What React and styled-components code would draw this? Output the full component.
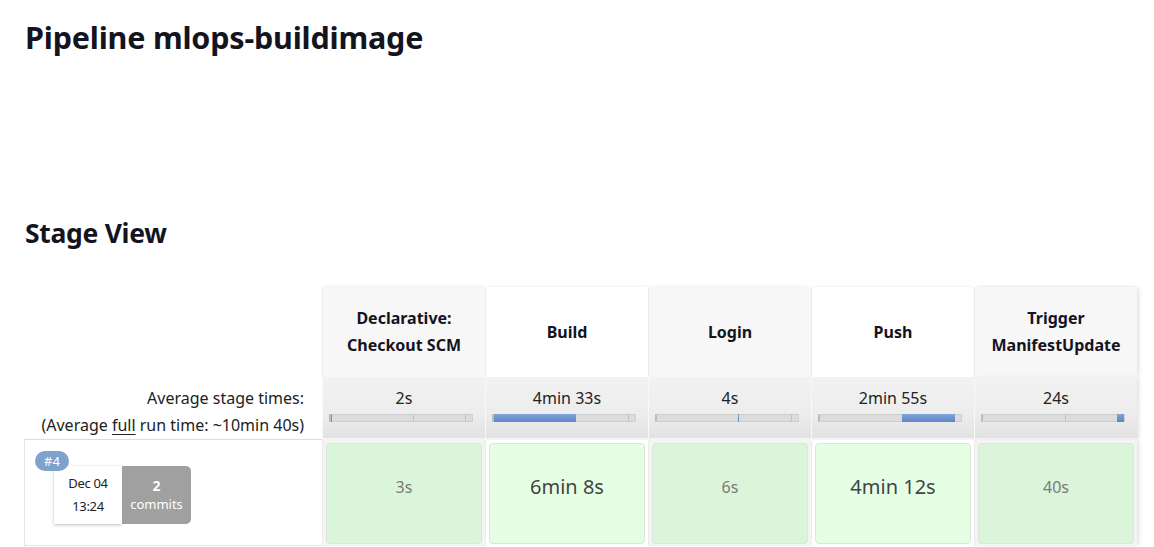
import React from "react"
import styled, { createGlobalStyle } from "styled-components"

const GlobalStyle = createGlobalStyle`
  body {
    margin: 0;
    background: #fff;
    font-family: "Noto Sans", "Open Sans", sans-serif;
    color: #14141f;
  }
`

const Page = styled.div`
  padding: 0 24px;
  overflow: hidden;
  height: 547px;
`

const Title = styled.h1`
  margin: 17px 0 0 1px;
  font-size: 30.5px;
  font-weight: 700;
  line-height: 40px;
  letter-spacing: -0.2px;
`

const Section = styled.h2`
  margin: 158px 0 0 1px;
  font-size: 26.5px;
  font-weight: 700;
  line-height: 36px;
  letter-spacing: -0.3px;
`

const Grid = styled.div`
  margin-top: 36px;
  display: grid;
  grid-template-columns: 298px repeat(5, 163px);
  grid-template-rows: 90px 63px 106px;
`

const Blank = styled.div``

const Head = styled.div`
  background: ${(p) => (p.$odd ? "#f7f7f7" : "#fff")};
  border-left: 1px solid #ececec;
  box-shadow: ${(p) =>
    p.$last
      ? "3px 0 4px -1px rgba(0,0,0,0.12), 0 -2px 3px -2px rgba(0,0,0,0.1)"
      : "0 -2px 3px -2px rgba(0,0,0,0.1)"};
  display: flex;
  align-items: center;
  justify-content: center;
  text-align: center;
  font-size: 16px;
  font-weight: 700;
  line-height: 27px;
  padding: 0 8px;
`

const AvgLabel = styled.div`
  text-align: right;
  padding: 8px 18px 0 0;
  font-size: 16px;
  line-height: 27px;
  color: #222;
  border-bottom: 1px solid #ddd;

  u {
    text-underline-offset: 3px;
  }
`

const AvgCell = styled.div`
  background: linear-gradient(#f2f2f2 0%, #ededed 60%, #e2e2e2 100%);
  border-left: 1px solid #f8f8f8;
  border-bottom: 2px solid #f4f4f4;
  box-shadow: ${(p) => (p.$last ? "3px 0 4px -1px rgba(0,0,0,0.12)" : "none")};
  padding: 8px 6px 0 6px;
  text-align: center;
  font-size: 16px;
  line-height: 27px;
  color: #222;
`

const Track = styled.div`
  position: relative;
  margin: 2px 6px 0 0;
  height: 6px;
  background: #dcdcdc;
  border: 1px solid #cfcfcf;
  border-left: 2px solid #bbb;
`

const Tick = styled.span`
  position: absolute;
  top: 0;
  bottom: 0;
  width: 1px;
  background: #c2c2c2;
`

const Fill = styled.span`
  position: absolute;
  top: -1px;
  bottom: -1px;
  background: linear-gradient(#7fa3d9, #5c86c8);
`

const RunCell = styled.div`
  border-left: 1px solid #e4e4e4;
  border-bottom: 1px solid #e4e4e4;
  position: relative;
`

const Badge = styled.span`
  position: absolute;
  left: 10px;
  top: 11px;
  z-index: 1;
  background: #7fa2cc;
  color: #fff;
  font-size: 13px;
  line-height: 20px;
  padding: 0 9px;
  border-radius: 10px;
`

const RunBox = styled.div`
  position: absolute;
  left: 29px;
  top: 26px;
  display: flex;
  height: 58px;
`

const DateBox = styled.div`
  width: 68px;
  background: #fff;
  box-shadow: 0 1px 3px rgba(0, 0, 0, 0.25);
  display: flex;
  flex-direction: column;
  align-items: center;
  justify-content: center;
  gap: 6px;
  font-size: 13px;
  line-height: 17px;
  color: #222;
  letter-spacing: -0.3px;
`

const Commits = styled.div`
  width: 69px;
  background: #a0a0a0;
  border-radius: 0 5px 5px 0;
  color: #fff;
  display: flex;
  flex-direction: column;
  align-items: center;
  justify-content: center;
  font-size: 13px;
  line-height: 19px;

  b {
    font-size: 14px;
  }
`

const StageCol = styled.div`
  background: ${(p) => (p.$odd ? "#f4f4f4" : "#fff")};
  border-left: 1px solid #ececec;
  box-shadow: ${(p) => (p.$last ? "3px 0 4px -1px rgba(0,0,0,0.12)" : "none")};
  padding: 3px 3px 2px 3px;
`

const Result = styled.div`
  height: 100%;
  box-sizing: border-box;
  background: rgba(0, 255, 0, 0.1);
  border: 1px solid #dbe6da;
  border-radius: 4px;
  display: flex;
  align-items: center;
  justify-content: center;
  padding-bottom: 14px;
  font-size: ${(p) => (p.$big ? "20px" : "16px")};
  color: ${(p) => (p.$big ? "#444" : "#7a7a7a")};
`

const stages = [
  { name: ["Declarative:", "Checkout SCM"], avg: "2s", fill: [0, 0.7], ticks: [58, 95], run: "3s" },
  { name: ["Build"], avg: "4min 33s", fill: [0, 58], ticks: [95], run: "6min 8s", big: true },
  { name: ["Login"], avg: "4s", fill: [57.5, 1], ticks: [95], run: "6s" },
  { name: ["Push"], avg: "2min 55s", fill: [58.5, 37], ticks: [], run: "4min 12s", big: true },
  { name: ["Trigger", "ManifestUpdate"], avg: "24s", fill: [95, 5], ticks: [58], run: "40s" },
]

export default function App() {
  return (
    <Page>
      <GlobalStyle />
      <Title>Pipeline mlops-buildimage</Title>
      <Section>Stage View</Section>
      <Grid>
        <Blank />
        {stages.map((s, i) => (
          <Head key={s.avg} $odd={i % 2 === 0} $last={i === 4}>
            <div>
              {s.name.map((n) => (
                <div key={n}>{n}</div>
              ))}
            </div>
          </Head>
        ))}

        <AvgLabel>
          Average stage times:
          <br />
          (Average <u>full</u> run time: ~10min 40s)
        </AvgLabel>
        {stages.map((s, i) => (
          <AvgCell key={s.avg} $last={i === 4}>
            {s.avg}
            <Track>
              {s.ticks.map((t) => (
                <Tick key={t} style={{ left: `${t}%` }} />
              ))}
              <Fill style={{ left: `${s.fill[0]}%`, width: `${s.fill[1]}%` }} />
            </Track>
          </AvgCell>
        ))}

        <RunCell>
          <Badge>#4</Badge>
          <RunBox>
            <DateBox>
              <span>Dec 04</span>
              <span>13:24</span>
            </DateBox>
            <Commits>
              <b>2</b>
              <span>commits</span>
            </Commits>
          </RunBox>
        </RunCell>
        {stages.map((s, i) => (
          <StageCol key={s.avg} $odd={i % 2 === 0} $last={i === 4}>
            <Result $big={s.big}>{s.run}</Result>
          </StageCol>
        ))}
      </Grid>
    </Page>
  )
}
